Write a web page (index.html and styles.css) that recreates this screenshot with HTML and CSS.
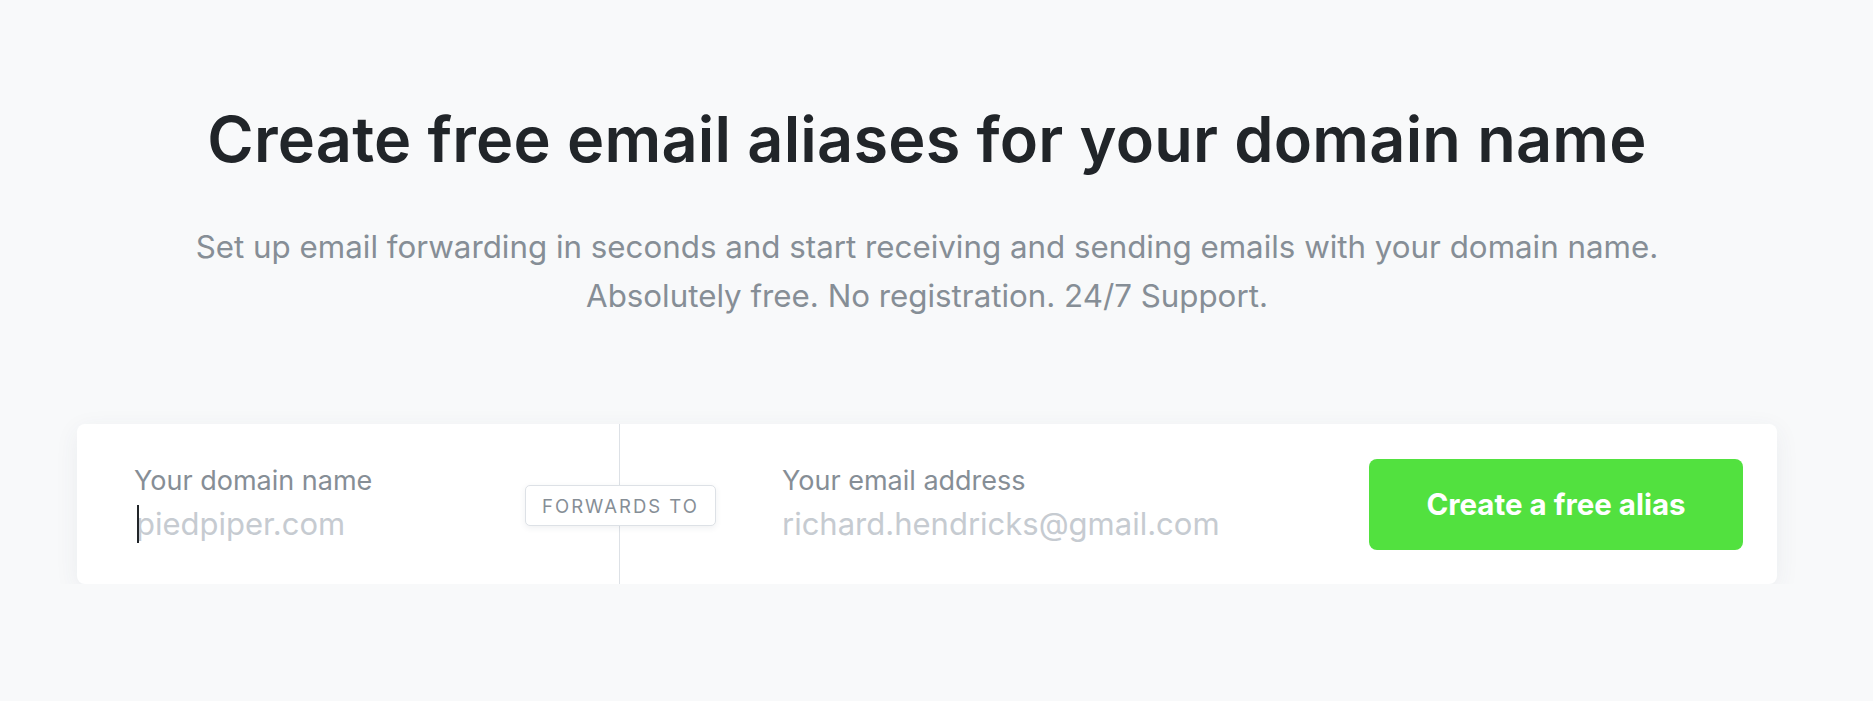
FILE: index.html
```html
<!DOCTYPE html>
<html lang="en">

<head>
    <meta charset="UTF-8">
    <meta name="viewport" content="width=device-width, initial-scale=1.0">
    <title>Free email aliases</title>
    <link rel="stylesheet" href="styles.css">
</head>

<body>
    <div class="hero">
        <h1>Create free email aliases for your domain name</h1>

        <p class="lead">
            Set up email forwarding in seconds and start receiving and sending emails with your domain name.<br>
            Absolutely free. No registration. 24/7 Support.
        </p>

        <form class="alias-form" onsubmit="return false">
            <div class="field field-domain">
                <label for="domain">Your domain name</label>
                <div class="input-wrap">
                    <span class="caret"></span>
                    <input type="text" id="domain" class="input-focused" placeholder="piedpiper.com">
                </div>
                <span class="badge">Forwards to</span>
            </div>

            <div class="field field-email">
                <label for="email">Your email address</label>
                <div class="input-wrap">
                    <input type="email" id="email" placeholder="richard.hendricks@gmail.com">
                </div>
            </div>

            <button type="submit" class="btn-create">Create a free alias</button>
        </form>
    </div>
</body>
</html>
```

FILE: styles.css
```css
body {
    font-family: 'Inter', 'Liberation Sans', sans-serif;
    background-color: #f8f9fa;
    color: #212529;
    margin: 0;
    padding: 0;
}

.hero {
    width: 1854px;
    padding-top: 101px;
    display: flex;
    flex-direction: column;
    align-items: center;
}

h1 {
    font-size: 63px;
    font-weight: 600;
    letter-spacing: 0.2px;
    line-height: 76px;
    margin: 0;
    text-align: center;
}

.lead {
    font-size: 31.3px;
    line-height: 49px;
    color: #868e96;
    text-align: center;
    margin: 46px 0 0;
}

.alias-form {
    width: 1700px;
    height: 160px;
    margin-top: 103px;
    display: flex;
    align-items: stretch;
    background-color: #fff;
    border-radius: 8px;
    box-shadow: 0 6px 24px rgba(52, 70, 94, 0.07);
    box-sizing: border-box;
}

.field {
    display: flex;
    flex-direction: column;
    justify-content: center;
}

.field-domain {
    position: relative;
    flex: 0 0 543px;
    padding-left: 57px;
    box-sizing: border-box;
    border-right: 1px solid #dde1e6;
}

.field-email {
    flex: 1;
    padding-left: 162px;
}

label {
    font-size: 27px;
    line-height: 32px;
    color: #868e96;
}

.input-wrap {
    position: relative;
    margin-top: 8px;
}

input {
    font-family: inherit;
    font-size: 31px;
    line-height: 38px;
    border: none;
    outline: none;
    padding: 0;
    margin: 0;
    width: 100%;
    background: transparent;
    color: #212529;
}

.input-focused {
    padding-left: 2px;
}

input::placeholder {
    color: #c6cbd1;
}

.caret {
    position: absolute;
    left: 3px;
    top: 0;
    width: 2px;
    height: 38px;
    background-color: #212529;
}

.badge {
    position: absolute;
    right: -97px;
    top: 61px;
    width: 191px;
    height: 41px;
    box-sizing: border-box;
    display: flex;
    align-items: center;
    justify-content: center;
    background-color: #fff;
    border: 1px solid #dde1e6;
    border-radius: 5px;
    box-shadow: 0 2px 6px rgba(52, 70, 94, 0.08);
    font-size: 18.5px;
    letter-spacing: 2px;
    text-transform: uppercase;
    color: #868e96;
}

.btn-create {
    align-self: center;
    width: 374px;
    height: 91px;
    margin-right: 34px;
    border: none;
    border-radius: 8px;
    background-color: #52e13f;
    color: #fff;
    font-family: inherit;
    font-size: 29.5px;
    font-weight: 700;
    cursor: pointer;
}
```
